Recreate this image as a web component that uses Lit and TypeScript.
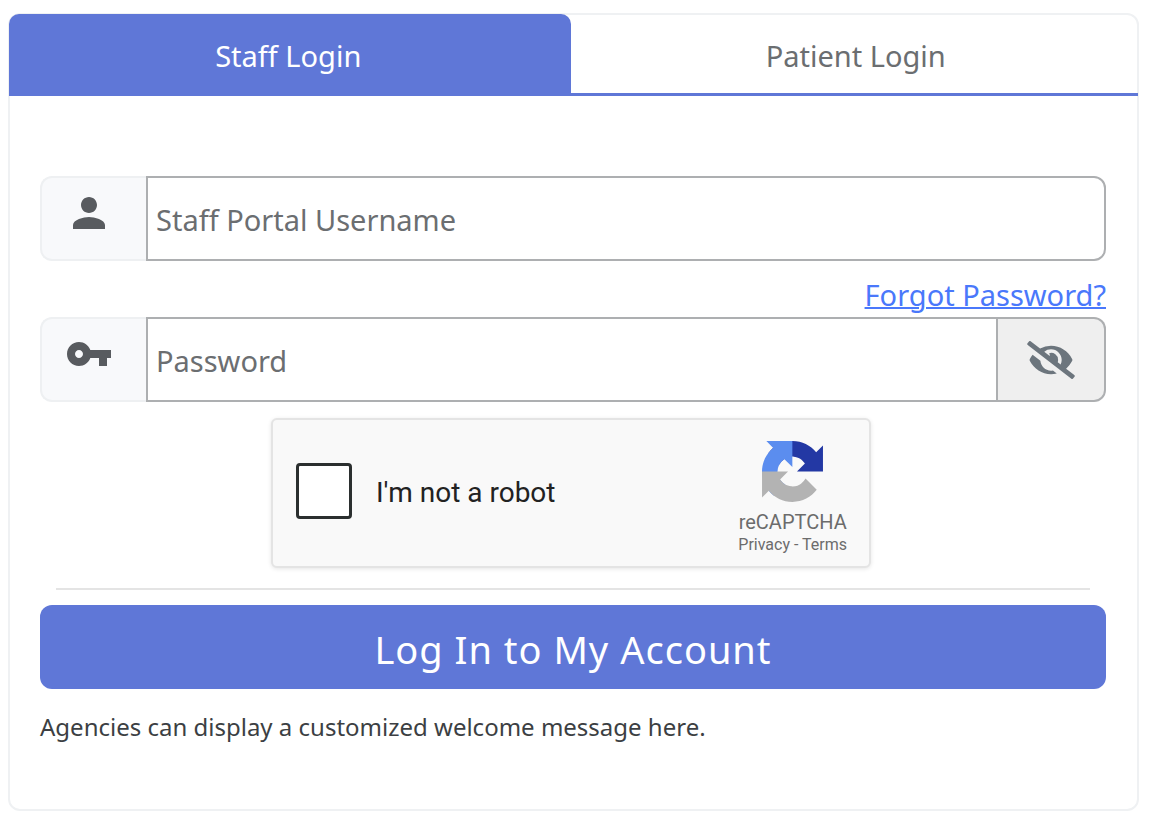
import { LitElement, html, css } from "lit";
import { customElement, state } from "lit/decorators.js";

@customElement("recaptcha-box")
export class RecaptchaBox extends LitElement {
  static styles = css`
    :host {
      display: block;
      width: 600px;
      max-width: 100%;
      font-family: Roboto, sans-serif;
    }
    .box {
      box-sizing: border-box;
      display: flex;
      align-items: center;
      height: 150px;
      padding: 0 22px 4px 23px;
      border: 2px solid #e4e4e4;
      border-radius: 6px;
      background: #f9f9f9;
      box-shadow: 0 1px 4px rgba(0, 0, 0, 0.1);
    }
    .check {
      appearance: none;
      box-sizing: border-box;
      flex: none;
      width: 56px;
      height: 56px;
      margin: 0 24px 0 0;
      border: 3px solid #2b2f2f;
      border-radius: 4px;
      background: #fff;
    }
    .check:checked {
      background: #4285f4;
    }
    .text {
      flex: 1;
      color: #222;
      font-size: 28px;
      line-height: 32px;
      padding-top: 4px;
    }
    .brand {
      display: flex;
      flex-direction: column;
      align-items: center;
      padding-top: 14px;
      color: #6c6c6c;
    }
    .logo {
      width: 61px;
      height: 61px;
    }
    .name {
      margin-top: 8px;
      font-size: 20px;
      line-height: 24px;
    }
    .links {
      font-size: 16px;
      line-height: 22px;
    }
    .links a {
      color: inherit;
      text-decoration: none;
    }
  `;

  render() {
    return html`
      <div class="box">
        <input class="check" id="robot" type="checkbox" />
        <label class="text" for="robot">I'm not a robot</label>
        <div class="brand">
          <svg class="logo" viewBox="0 0 64 64" aria-hidden="true">
            <path fill="#2338a4" d="M64 31.955l-.033-1.37V4.687l-7.16 7.16C50.948 4.674 42.033.093 32.05.093c-10.4 0-19.622 4.96-25.458 12.64l11.736 11.86a15.55 15.55 0 0 1 4.754-5.334c2.05-1.6 4.952-2.906 8.968-2.906.485 0 .86.057 1.135.163 4.976.393 9.288 3.14 11.828 7.124l-8.307 8.307L64 31.953" />
            <path fill="#5b8def" d="M31.862.094l-1.37.033H4.594l7.16 7.16C4.58 13.147 0 22.06 0 32.046c0 10.4 4.96 19.622 12.64 25.458L24.5 45.768a15.55 15.55 0 0 1-5.334-4.754c-1.6-2.05-2.906-4.952-2.906-8.968 0-.485.057-.86.163-1.135.393-4.976 3.14-9.288 7.124-11.828l8.307 8.307L31.86.095" />
            <path fill="#b3b3b3" d="M.001 32.045l.033 1.37v25.898l7.16-7.16c5.86 7.173 14.774 11.754 24.76 11.754 10.4 0 19.622-4.96 25.458-12.64l-11.736-11.86a15.55 15.55 0 0 1-4.754 5.334c-2.05 1.6-4.952 2.906-8.968 2.906-.485 0-.86-.057-1.135-.163-4.976-.393-9.288-3.14-11.828-7.124l8.307-8.307c-10.522.04-22.4.066-27.295-.005" />
          </svg>
          <div class="name">reCAPTCHA</div>
          <div class="links"><a href="#privacy">Privacy</a> - <a href="#terms">Terms</a></div>
        </div>
      </div>
    `;
  }
}

@customElement("app-root")
export class AppRoot extends LitElement {
  @state() private tab = "staff";
  @state() private reveal = false;

  static styles = css`
    :host {
      display: block;
      padding: 13px 19px 22px 8px;
      background: #fff;
      font-family: "Segoe UI", "Noto Sans", sans-serif;
    }
    .card {
      border: 2px solid #eff1f3;
      border-radius: 12px;
    }
    .tabs {
      display: flex;
      gap: 6px;
      margin: -1px -1px 0;
      border-bottom: 3px solid #5f77d7;
    }
    .tab {
      flex: 1;
      height: 79px;
      padding: 4px 3px 0 0;
      border: 0;
      background: transparent;
      color: #6b6e71;
      font: inherit;
      font-size: 29px;
    }
    .tab.active {
      border-radius: 10px 10px 0 0;
      background: #5f77d7;
      color: #fff;
    }
    .form {
      padding: 80px 31px 64px 30px;
    }
    .field {
      display: flex;
      height: 85px;
    }
    .lead {
      box-sizing: border-box;
      flex: none;
      width: 106px;
      padding: 11px 0 0 23px;
      border: 2px solid #eef0f2;
      border-right: 0;
      border-radius: 12px 0 0 12px;
      background: #f8f9fb;
      color: #585b5f;
    }
    .glyph {
      display: block;
      width: 48px;
      height: 48px;
      fill: currentColor;
    }
    .input {
      box-sizing: border-box;
      flex: 1;
      min-width: 0;
      padding: 2px 8px 0;
      border: 2px solid #adafb1;
      border-radius: 0;
      background: #fff;
      color: #333;
      font: inherit;
      font-size: 29px;
    }
    .input.last {
      border-radius: 0 12px 12px 0;
    }
    .input::placeholder {
      color: #6b6e71;
      opacity: 1;
    }
    .reveal {
      box-sizing: border-box;
      display: flex;
      flex: none;
      align-items: center;
      justify-content: center;
      width: 108px;
      padding: 0;
      border: 2px solid #adafb1;
      border-left: 0;
      border-radius: 0 12px 12px 0;
      background: #efefef;
      color: #6c757d;
    }
    .eye {
      width: 48px;
      height: 38px;
      fill: currentColor;
    }
    .forgot {
      display: flex;
      justify-content: flex-end;
      padding: 14px 0 2px;
      font-size: 29px;
      line-height: 40px;
    }
    .forgot a {
      color: #4a78fb;
      text-decoration-thickness: 2px;
    }
    .captcha {
      display: flex;
      justify-content: center;
      padding: 16px 4px 20px 0;
    }
    .rule {
      height: 2px;
      margin: 0 16px 15px;
      border: 0;
      background: #e4e4e4;
    }
    .submit {
      display: block;
      width: 100%;
      height: 84px;
      padding: 4px 0 0;
      border: 0;
      border-radius: 12px;
      background: #5f77d7;
      color: #fff;
      font: inherit;
      font-size: 38px;
      letter-spacing: 1px;
    }
    .welcome {
      margin: 20px 0 0;
      color: #3c3f43;
      font-size: 24px;
      line-height: 36px;
    }
  `;

  render() {
    const tabs = [
      { id: "staff", label: "Staff Login" },
      { id: "patient", label: "Patient Login" },
    ];
    return html`
      <main class="card">
        <div class="tabs" role="tablist">
          ${tabs.map(
            (t) => html`<button
              class="tab ${this.tab === t.id ? "active" : ""}"
              type="button"
              role="tab"
              aria-selected=${this.tab === t.id}
              @click=${() => (this.tab = t.id)}
            >${t.label}</button>`
          )}
        </div>
        <form class="form" @submit=${(e: Event) => e.preventDefault()}>
          <div class="field">
            <label class="lead" for="username">
              <svg class="glyph" viewBox="0 0 24 24" aria-hidden="true">
                <path d="M12 12c2.21 0 4-1.79 4-4s-1.79-4-4-4-4 1.79-4 4 1.79 4 4 4zm0 2c-2.67 0-8 1.34-8 4v2h16v-2c0-2.66-5.33-4-8-4z" />
              </svg>
            </label>
            <input class="input last" id="username" type="text" aria-label="Staff Portal Username" placeholder="Staff Portal Username" />
          </div>
          <div class="forgot"><a href="#forgot">Forgot Password?</a></div>
          <div class="field">
            <label class="lead" for="password">
              <svg class="glyph" viewBox="0 0 24 24" aria-hidden="true">
                <path d="M12.65 10C11.83 7.67 9.61 6 7 6c-3.31 0-6 2.69-6 6s2.69 6 6 6c2.61 0 4.83-1.67 5.65-4H17v4h4v-4h2v-4H12.65zM7 14c-1.1 0-2-.9-2-2s.9-2 2-2 2 .9 2 2-.9 2-2 2z" />
              </svg>
            </label>
            <input class="input" id="password" type=${this.reveal ? "text" : "password"} aria-label="Password" placeholder="Password" />
            <button class="reveal" type="button" aria-label="Show password" @click=${() => (this.reveal = !this.reveal)}>
              <svg class="eye" viewBox="0 0 640 512" aria-hidden="true">
                <path d="M320 400c-75.85 0-137.25-58.71-142.9-133.11L72.2 185.82c-13.79 17.3-26.48 35.59-36.72 55.59a32.35 32.35 0 0 0 0 29.19C89.71 376.41 197.07 448 320 448c26.91 0 52.87-4 77.89-10.46L346 397.39a144.13 144.13 0 0 1-26 2.61zm313.82 58.1l-110.55-85.44a331.25 331.25 0 0 0 81.25-102.07 32.35 32.35 0 0 0 0-29.19C550.29 135.59 442.93 64 320 64a308.15 308.15 0 0 0-147.32 37.7L45.46 3.37A16 16 0 0 0 23 6.18L3.37 31.45A16 16 0 0 0 6.18 53.9l588.36 454.73a16 16 0 0 0 22.46-2.81l19.64-25.27a16 16 0 0 0-2.82-22.45zm-183.72-142l-39.3-30.38A94.75 94.75 0 0 0 416 256a94.76 94.76 0 0 0-121.31-92.21A47.65 47.65 0 0 1 304 192a46.64 46.64 0 0 1-1.54 10l-73.61-56.89A142.31 142.31 0 0 1 320 112a143.92 143.92 0 0 1 144 144c0 21.63-5.29 41.79-13.9 60.11z" />
              </svg>
            </button>
          </div>
          <div class="captcha"><recaptcha-box></recaptcha-box></div>
          <hr class="rule" />
          <button class="submit" type="submit">Log In to My Account</button>
          <p class="welcome">Agencies can display a customized welcome message here.</p>
        </form>
      </main>
    `;
  }
}
